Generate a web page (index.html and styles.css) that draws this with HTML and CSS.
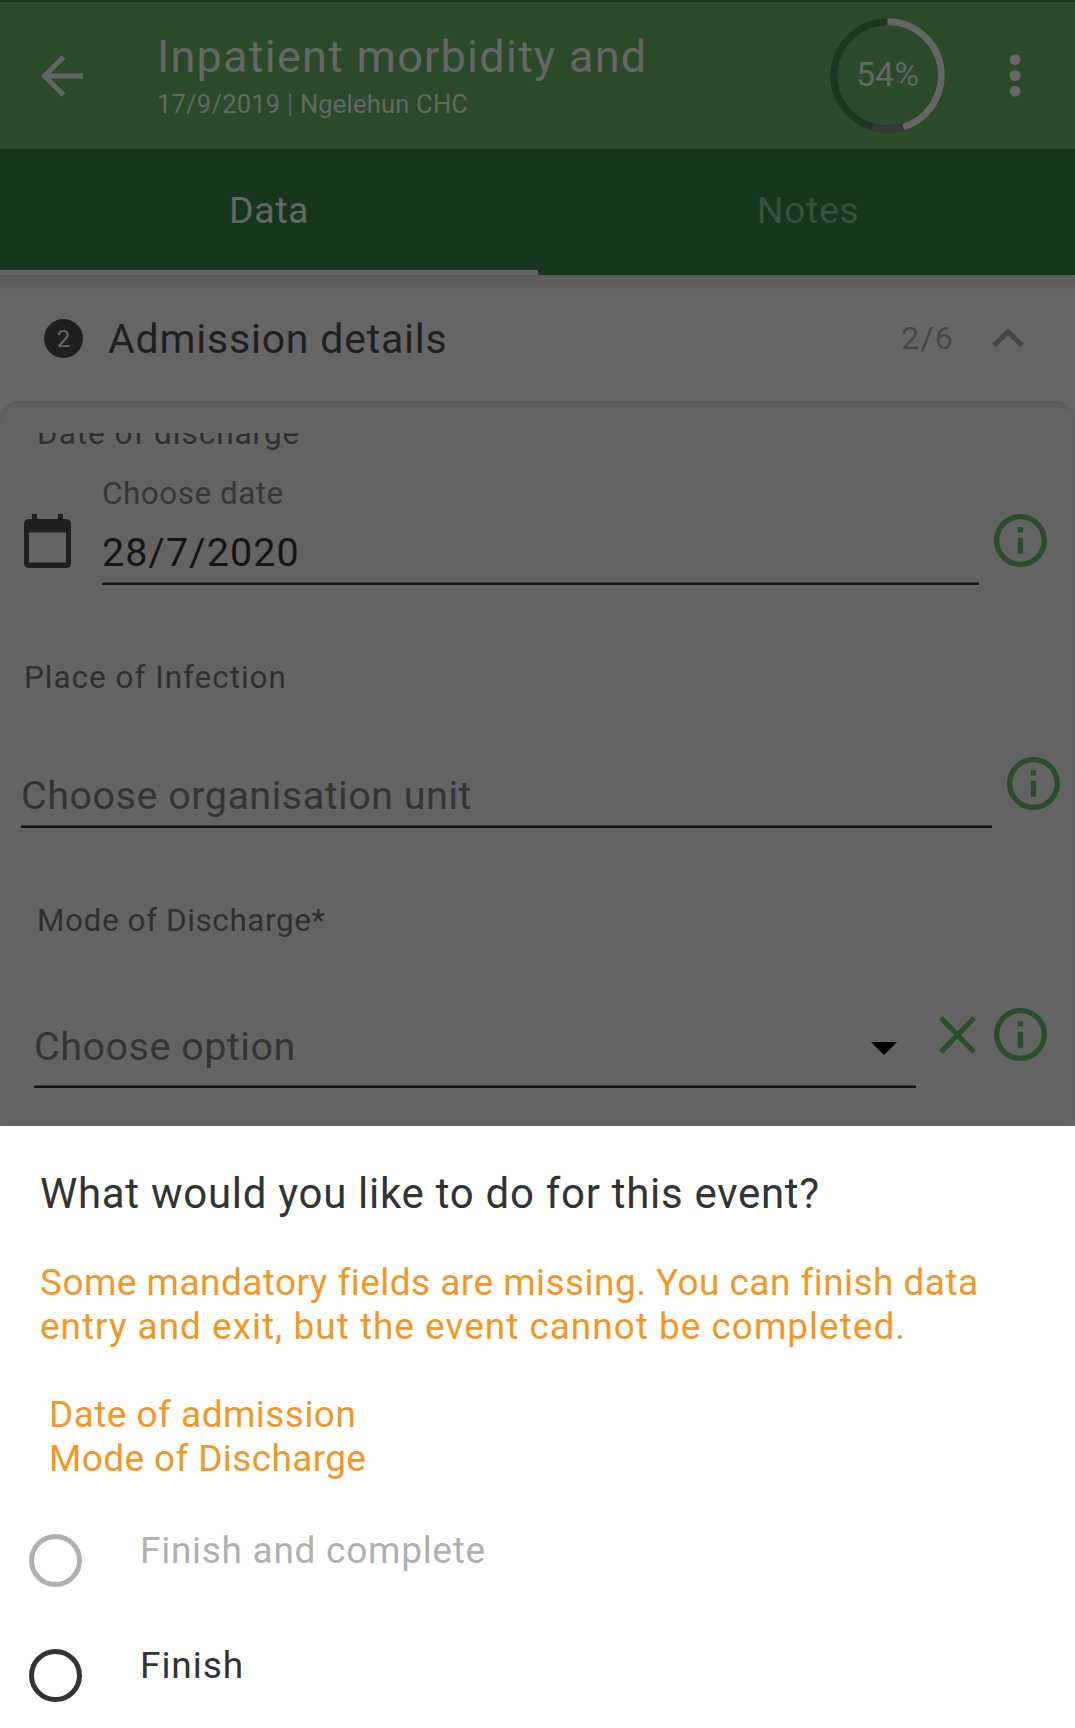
FILE: index.html
```html
<!DOCTYPE html>
<html lang="en">
<head>
<meta charset="utf-8">
<title>Inpatient morbidity and</title>
<link rel="stylesheet" href="styles.css">
</head>
<body>
<svg class="defs" width="0" height="0">
  <symbol id="info" viewBox="2 2 20 20"><path fill="currentColor" d="M11 17h2v-6h-2v6zm1-15C6.48 2 2 6.48 2 12s4.480 10 10 10 10-4.480 10-10S17.520 2 12 2zm0 18c-4.410 0-8-3.590-8-8s3.590-8 8-8 8 3.590 8 8-3.590 8-8 8zM11 9h2V7h-2v2z"/></symbol>
</svg>
<div class="screen">
  <header class="appbar">
    <svg class="back" width="42" height="42" viewBox="0 0 42 42"><path d="M42 21H4M22.500 2L3.500 21l19 19" fill="none" stroke="currentColor" stroke-width="5"/></svg>
    <div class="heading">
      <h1 class="heading-title">Inpatient morbidity and</h1>
      <p class="heading-sub">17/9/2019 | Ngelehun CHC</p>
    </div>
    <div class="progress">
      <svg class="ring" viewBox="0 0 115 115" fill="none" stroke-width="7">
        <circle cx="57.500" cy="57.500" r="53.500" stroke="#1d3620"/>
        <g transform="rotate(-90 57.500 57.500)">
          <circle cx="57.500" cy="57.500" r="53.800" stroke="#666" pathLength="100" stroke-dasharray="45.300 54.700"/>
          <circle cx="57.500" cy="57.500" r="53.800" stroke="#373737" pathLength="100" stroke-dasharray="9.300 90.700" stroke-dashoffset="-45.300"/>
        </g>
      </svg>
      <span class="percent">54%</span>
    </div>
    <svg class="more" width="12" height="43" viewBox="0 0 12 43" fill="currentColor"><circle cx="6" cy="5.700" r="5.500"/><circle cx="6" cy="21.500" r="5.500"/><circle cx="6" cy="37.200" r="5.500"/></svg>
  </header>
  <nav class="tabs">
    <div class="tab tab-active">Data</div>
    <div class="tab tab-notes">Notes</div>
  </nav>
  <section class="section-head">
    <span class="step">2</span>
    <h2 class="section-title">Admission details</h2>
    <span class="count">2/6</span>
    <svg class="chevron" width="32" height="20" viewBox="0 0 32 20"><path d="M2 17.500L16 3.500l14 14" fill="none" stroke="currentColor" stroke-width="5"/></svg>
  </section>
  <main class="card">
    <div class="fields">
      <div class="label label-inset label-first">Date of discharge</div>
      <div class="row row-date">
        <svg class="calendar" width="47" height="54" viewBox="0 0 47 54"><path fill="currentColor" fill-rule="evenodd" d="M8 0h5v5h21V0h5v5h3q5 0 5 5v39q0 5-5 5H5q-5 0-5-5V10Q0 5 5 5h3zM5 18.500v30h37v-30z"/></svg>
        <div class="input input-date">
          <span class="hint">Choose date</span>
          <span class="value">28/7/2020</span>
        </div>
        <svg class="info"><use href="#info"/></svg>
      </div>
      <div class="label label-place">Place of Infection</div>
      <div class="row row-place">
        <div class="input input-place"><span class="placeholder">Choose organisation unit</span></div>
        <svg class="info"><use href="#info"/></svg>
      </div>
      <div class="label label-inset label-mode">Mode of Discharge*</div>
      <div class="row row-mode">
        <div class="input input-mode">
          <span class="placeholder">Choose option</span>
          <svg class="caret" width="26" height="13" viewBox="0 0 26 13"><path d="M0 0h26L13 13z"/></svg>
        </div>
        <svg class="clear" width="37" height="38" viewBox="0 0 37 38"><path d="M2 2l33 34M35 2L2 36" fill="none" stroke="currentColor" stroke-width="5"/></svg>
        <svg class="info"><use href="#info"/></svg>
      </div>
    </div>
  </main>
  <div class="sheet">
    <h3 class="sheet-title">What would you like to do for this event?</h3>
    <p class="warning">Some mandatory fields are missing. You can finish data<br><span class="warning-end">entry and exit, but the event cannot be completed.</span></p>
    <ul class="missing">
      <li>Date of admission</li>
      <li class="missing-mode">Mode of Discharge</li>
    </ul>
    <div class="option option-disabled"><span class="radio"></span><span>Finish and complete</span></div>
    <div class="option"><span class="radio"></span><span class="option-finish">Finish</span></div>
  </div>
</div>
</body>
</html>
```
FILE: styles.css
```css
* { box-sizing: border-box; margin: 0; padding: 0; }
body { font-family: Roboto, "Liberation Sans", sans-serif; background: #fff; }
h1, h2, h3 { font-weight: 400; }
svg { display: block; flex: none; }
.defs { position: absolute; }
.screen { display: flex; flex-direction: column; width: 1075px; height: 1728px; overflow: hidden; border-top: 2px solid #15361a; background: #666; }

.appbar { display: flex; height: 147px; padding-left: 41px; background: #2a4a2a; color: #666; align-items: center; }
.heading { align-self: flex-start; width: 597px; margin-left: 75px; padding-top: 30px; }
.heading-title { margin-left: -1px; font-size: 45px; line-height: 50px; letter-spacing: 1.240px; white-space: nowrap; }
.heading-sub { margin: 7px 0 0 -1px; font-size: 25.500px; line-height: 30px; letter-spacing: 0.220px; }
.progress { display: grid; width: 115px; height: 115px; margin-left: 75px; place-items: center; }
.ring, .percent { grid-area: 1 / 1; }
.ring { width: 115px; height: 115px; }
.percent { font-size: 34px; line-height: 40px; margin-top: -3px; }
.more { margin-left: 63.500px; }

.tabs { display: grid; grid-template-columns: 538px 537px; height: 126px; background: #15361a; }
.tab { height: 126px; padding-top: 38px; text-align: center; font-size: 37.500px; line-height: 46px; letter-spacing: 0.600px; color: #3b4f3d; }
.tab-active { color: #666; border-bottom: 5px solid #666; }
.tab-notes { padding-left: 3px; }

.section-head { display: flex; align-items: center; height: 126px; padding: 0 51px 0 44px; background: linear-gradient(#5b5b5b, #636363 12px, #666 28px); color: #1f1f1f; }
.step { width: 39px; height: 39px; border-radius: 50%; background: #1f1f1f; color: #666; font-size: 24px; line-height: 41px; text-align: center; }
.section-title { margin: 1px 0 0 25px; font-size: 41px; line-height: 48px; letter-spacing: 0.800px; }
.count { margin: 0 0 0 auto; font-size: 32px; line-height: 38px; letter-spacing: 1.200px; color: #464646; }
.chevron { margin-left: 38px; color: #464646; }

.card { height: 725px; padding-top: 32px; border-radius: 20px 20px 0 0; background: #646464; box-shadow: inset 0 6px 6px -4px #5a5a5a; }
.fields { height: 693px; overflow: hidden; }
.label { font-size: 31.500px; line-height: 36px; letter-spacing: 0.970px; color: #2f2f2f; }
.label-inset { padding-left: 37px; }
.label-first { margin-top: -17px; }
.label-place { margin-top: 75px; padding-left: 24px; }
.label-mode { margin-top: 75px; letter-spacing: 0.570px; }
.row { display: flex; align-items: flex-start; }
.input { display: flex; border-bottom: 2px solid #141414; box-shadow: inset 0 -1px #3c3c3c; font-size: 39.500px; line-height: 46px; }
.info { width: 53px; height: 53px; color: #2a4d2a; }
.calendar { color: #1f1f1f; }
.row-date { padding-left: 24px; }
.row-date .calendar, .row-date .info { margin-top: 62px; }
.row-date .info { margin-left: 15px; }
.input-date { flex-direction: column; width: 877px; margin-left: 31px; padding: 24px 0 7px; }
.hint { font-size: 31.500px; line-height: 36px; letter-spacing: 0.480px; color: #363636; }
.value { margin-top: 18px; letter-spacing: 1.100px; color: #141414; }
.placeholder { letter-spacing: 0.500px; color: #343434; }
.row-place { padding-left: 21px; }
.input-place { width: 971px; padding: 77px 0 7px; }
.row-place .info { margin: 61px 0 0 15px; }
.row-mode { padding-left: 34px; }
.input-mode { width: 882px; justify-content: space-between; padding: 85px 19px 16px 0; }
.caret { margin-top: 18px; }
.clear { margin: 77px 0 0 23px; color: #2a4d2a; }
.row-mode .info { margin: 69px 0 0 18px; }

.sheet { height: 602px; padding-top: 44px; background: #fff; color: #333; font-size: 37px; line-height: 44px; letter-spacing: 0.720px; overflow: hidden; white-space: nowrap; }
.sheet-title { padding-left: 40px; font-size: 42px; line-height: 48px; letter-spacing: 0.710px; }
.warning { margin-top: 43px; padding-left: 40px; color: #f29727; letter-spacing: 0.450px; }
.warning-end { letter-spacing: 0.980px; }
.missing { margin: 44px 0 48px; padding-left: 49px; list-style: none; color: #f29727; letter-spacing: 0.450px; }
.missing-mode { letter-spacing: 0.370px; }
.option { display: flex; height: 115px; padding-left: 29px; gap: 58px; }
.option-disabled { color: #b0b0b0; }
.option-finish { letter-spacing: 0.950px; }
.radio { width: 53px; height: 53px; margin-top: 5px; border: 5.500px solid currentColor; border-radius: 50%; }
```
